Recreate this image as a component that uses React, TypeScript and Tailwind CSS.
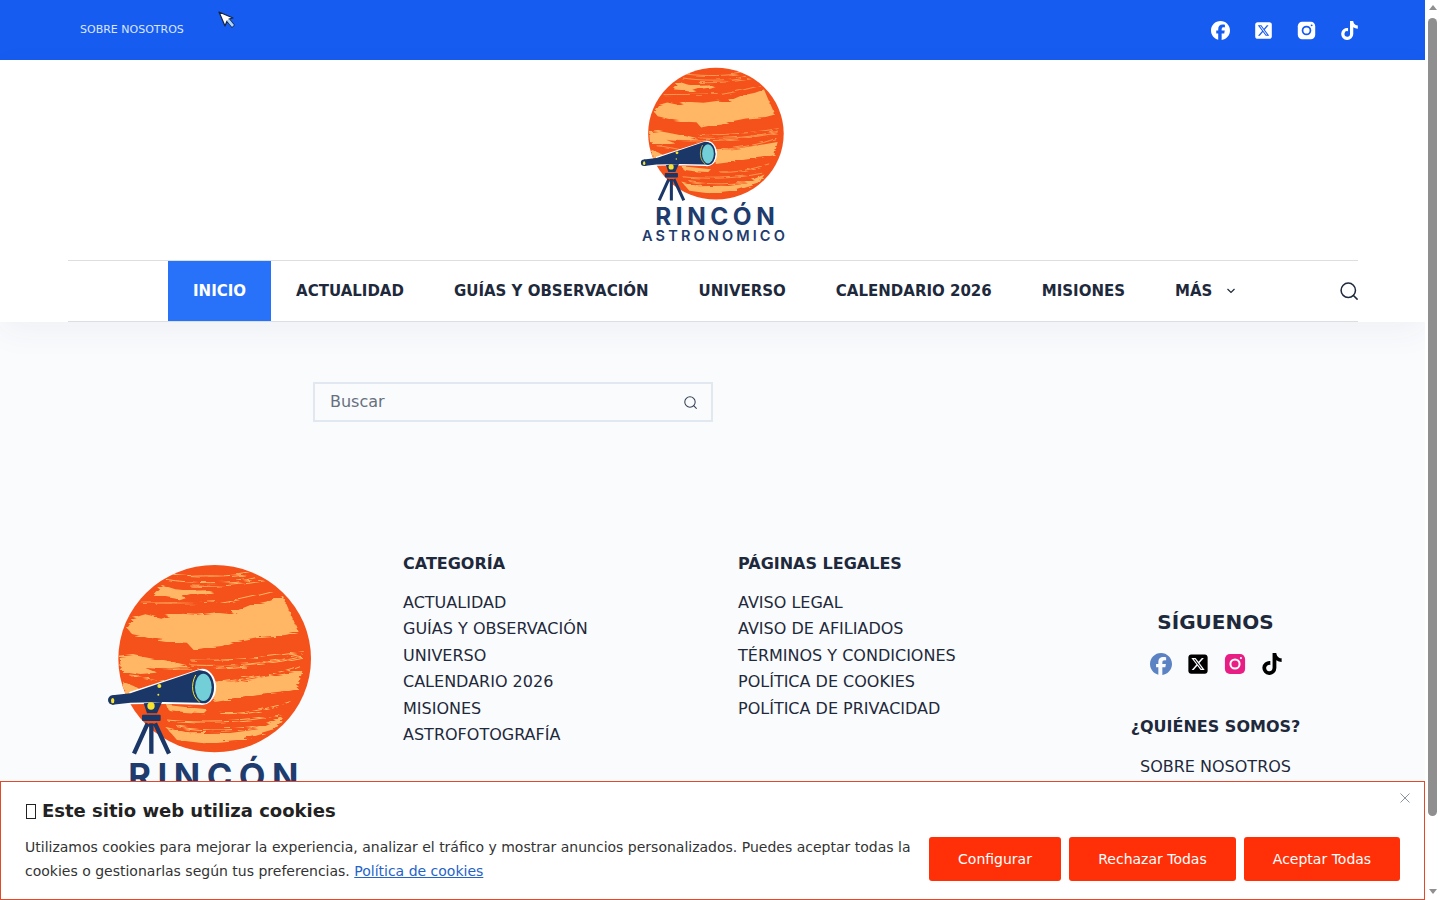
import { FaFacebook, FaSquareXTwitter, FaTiktok } from 'react-icons/fa6';

const FONT = "font-['DejaVu_Sans',sans-serif]";

const navItems = ['ACTUALIDAD', 'GUÍAS Y OBSERVACIÓN', 'UNIVERSO', 'CALENDARIO 2026', 'MISIONES'];
const categories = ['ACTUALIDAD', 'GUÍAS Y OBSERVACIÓN', 'UNIVERSO', 'CALENDARIO 2026', 'MISIONES', 'ASTROFOTOGRAFÍA'];
const legal = ['AVISO LEGAL', 'AVISO DE AFILIADOS', 'TÉRMINOS Y CONDICIONES', 'POLÍTICA DE COOKIES', 'POLÍTICA DE PRIVACIDAD'];

const stripes = [
  'M225 88 C300 100 420 105 500 82',
  'M240 72 C330 82 430 80 480 68',
  'M300 108 C400 112 480 100 525 92',
  'M150 160 C220 158 300 160 380 155',
  'M390 160 C450 150 510 135 560 122',
  'M300 330 C420 335 540 320 640 305',
  'M160 352 C300 365 480 355 635 322',
  'M300 345 C430 350 540 340 638 315',
  'M400 395 C470 385 560 375 632 345',
  'M390 490 C450 495 520 480 600 455',
  'M230 510 C330 520 450 520 570 495',
  'M240 545 C300 560 340 565 400 570',
  'M260 530 C340 545 450 545 560 520',
  'M120 378 C150 380 190 388 225 395',
];

// planet + telescope logo, drawn in one coordinate system and scaled by width
function Logo({ w, h }: { w: number; h: number }) {
  return (
    <svg width={w} height={h} viewBox="50 42 621 759" className="block shrink-0">
      <defs>
        <clipPath id="planet">
          <ellipse cx="373" cy="326" rx="289" ry="281" />
        </clipPath>
        <filter id="rough" x="-5%" y="-5%" width="110%" height="110%">
          <feTurbulence type="fractalNoise" baseFrequency="0.012 0.14" numOctaves="3" seed="4" />
          <feDisplacementMap in="SourceGraphic" scale="18" />
        </filter>
      </defs>
      <ellipse cx="373" cy="326" rx="289" ry="281" fill="#F4511B" />
      <g clipPath="url(#planet)">
        <g filter="url(#rough)" fill="#FFB766">
          <path d="M185 137 L215 105 L255 118 L300 122 L378 120 L345 130 L300 136 L265 148 L225 140Z" />
          <path d="M108 232 L125 205 L165 193 L210 203 L250 190 L320 194 L385 186 L420 190 L480 165 L540 152 L578 138 L598 185 L625 245 L585 255 L500 262 L430 275 L395 288 L345 293 L310 300 L290 278 L240 275 L190 268 L125 252Z" />
          <path d="M88 320 L130 315 L180 325 L250 338 L300 350 L240 358 L160 352 L200 368 L150 372 L92 362Z" />
          <path d="M98 395 L130 408 L150 420 L105 440Z" />
          <path d="M370 398 L450 392 L540 378 L636 362 L622 418 L570 428 L500 436 L430 448 L372 456Z" />
          <path d="M230 465 L290 472 L352 478 L340 490 L280 486 L235 480Z" />
          <path d="M225 530 L300 550 L400 548 L500 535 L580 500 L555 540 L460 568 L340 580 L260 570Z" />
        </g>
        <g stroke="#FFB766" strokeWidth="3" fill="none" filter="url(#rough)">
          {stripes.map((d) => (
            <path key={d} d={d} />
          ))}
        </g>
      </g>
      <path d="M120 428 L325 361 C355 352 378 385 374 420 C370 450 350 465 330 461 L215 458 L120 460 Z" fill="#fff" stroke="#fff" strokeWidth="6" />
      <path d="M66 436 L120 430 L325 361 C350 358 370 385 370 415 C368 445 350 462 330 458 L220 456 L120 458 L66 464Z" fill="#1B3768" />
      <circle cx="67" cy="450" r="14" fill="#1B3768" />
      <ellipse cx="67" cy="452" rx="5" ry="8" fill="#F7E32C" />
      <ellipse cx="340" cy="412" rx="31" ry="48" fill="#1B3768" />
      <ellipse cx="339" cy="412" rx="25" ry="41" fill="#72CFD8" />
      <path d="M316 375 C300 405 305 440 328 456" fill="none" stroke="#F7E32C" strokeWidth="3" />
      <circle cx="207" cy="408" r="6" fill="#F7E32C" />
      <circle cx="204" cy="434" r="3" fill="#F7E32C" />
      <path d="M160 460 L215 456 L200 490 L170 490Z" fill="#1B3768" />
      <circle cx="182" cy="468" r="11" fill="#F7E32C" />
      <rect x="155" y="494" width="56" height="19" rx="3" fill="#1B3768" />
      <path d="M172 520 L131 611 M183 520 L183 611 M194 520 L236 611" stroke="#1B3768" strokeWidth="13" fill="none" />
      <text x="114" y="714" textLength="510" lengthAdjust="spacing" fill="#1F3C6E" fontFamily="Inter, sans-serif" fontWeight="700" fontSize="104">RINCÓN</text>
      <text x="58" y="786" textLength="609" lengthAdjust="spacing" fill="#1F3C6E" fontFamily="Inter, sans-serif" fontWeight="600" fontSize="62">ASTRONOMICO</text>
    </svg>
  );
}

function InstaIcon({ bg, fg, size }: { bg: string; fg: string; size: number }) {
  return (
    <svg width={size} height={size} viewBox="0 0 24 24">
      <rect x="1" y="1" width="22" height="22" rx="5.5" fill={bg} />
      <circle cx="12" cy="12" r="5" fill="none" stroke={fg} strokeWidth="2.2" />
      <circle cx="18.5" cy="5.5" r="1.2" fill={fg} />
    </svg>
  );
}

function SearchIcon({ size, stroke }: { size: number; stroke: number }) {
  return (
    <svg width={size} height={size} viewBox="0 0 20 20" fill="none" stroke="currentColor" strokeWidth={stroke} strokeLinecap="round">
      <circle cx="9.2" cy="9.2" r="8" />
      <path d="M15.2 15.2 L19 19" />
    </svg>
  );
}

export default function App() {
  return (
    <div className={`flex h-screen w-full overflow-hidden bg-white ${FONT}`}>
      <div className="relative h-full w-[1425px] shrink-0 overflow-hidden bg-[#fafbfd]">
        {/* top bar */}
        <div className="flex h-[60px] items-center justify-between bg-[#175cf0] pl-[80px] pr-[66px] text-white">
          <a className="text-[11px] text-[#dbe6fd]">SOBRE NOSOTROS</a>
          <div className="flex items-center gap-[24px]">
            <FaFacebook size={19} />
            <FaSquareXTwitter size={19} />
            <InstaIcon bg="#ffffff" fg="#175cf0" size={19} />
            <FaTiktok size={19} />
          </div>
        </div>

        {/* mouse pointer caught in the shot */}
        <svg className="absolute left-[217px] top-[11px]" width="19" height="18" viewBox="0 0 19 18">
          <path d="M2 1 L8 15 L10 10 L15 16 L17 14 L12 8 L16 7Z" fill="#ffffff" stroke="#14233f" strokeWidth="1.2" strokeLinejoin="round" />
          <path d="M10 10 L15 16 L17 14 L12 8Z" fill="#a9d4fb" />
        </svg>

        {/* header */}
        <header className="relative bg-white shadow-[0_10px_30px_rgba(40,60,90,0.05)]">
          <div className="flex h-[200px] justify-center pt-[7px]">
            <Logo w={146} h={178} />
          </div>
          <div className="ml-[68px] mr-[67px] flex h-[62px] items-stretch border-y border-[#dcdfe2] pl-[100px] text-[#1e293b]">
            <a className="flex items-center bg-[#2872fa] px-[25px] text-[15px] font-bold text-white">INICIO</a>
            {navItems.map((item) => (
              <a key={item} className="flex items-center px-[25px] text-[15px] font-bold">
                {item}
              </a>
            ))}
            <a className="flex items-center gap-[15px] px-[25px] text-[15px] font-bold">
              MÁS
              <svg width="8" height="6" viewBox="0 0 8 6" fill="none" stroke="currentColor" strokeWidth="1.2">
                <path d="M0.5 1 L4 4.5 L7.5 1" />
              </svg>
            </a>
            <div className="ml-auto flex items-center text-[#1e293b]">
              <SearchIcon size={18} stroke={1.7} />
            </div>
          </div>
        </header>

        {/* search */}
        <main className="pl-[313px] pt-[60px]">
          <div className="flex h-[40px] w-[400px] items-center justify-between border-2 border-[#e1e8ef] pl-[15px] pr-[14px] text-[#334155]">
            <span className="text-[16px] text-[#66707f]">Buscar</span>
            <SearchIcon size={13} stroke={1.6} />
          </div>
        </main>

        {/* footer */}
        <footer className="ml-[68px] mr-[67px] mt-[133px] grid grid-cols-4 gap-[50px] text-[#1e293b]">
          <div className="flex justify-center pt-[9px]">
            <Logo w={207} h={253} />
          </div>
          <div>
            <h3 className="text-[16px] font-bold leading-[18px]">CATEGORÍA</h3>
            <ul className="mt-[17px] text-[16px] leading-[26.4px]">
              {categories.map((item) => (
                <li key={item}>{item}</li>
              ))}
            </ul>
          </div>
          <div>
            <h3 className="text-[16px] font-bold leading-[18px]">PÁGINAS LEGALES</h3>
            <ul className="mt-[17px] text-[16px] leading-[26.4px]">
              {legal.map((item) => (
                <li key={item}>{item}</li>
              ))}
            </ul>
          </div>
          <div className="flex flex-col items-center pt-[55px]">
            <h3 className="text-[20px] font-bold leading-[24px]">SÍGUENOS</h3>
            <div className="mt-[19px] flex items-center gap-[15px] pl-[1px]">
              <FaFacebook size={22} className="text-[#5b82c2]" />
              <FaSquareXTwitter size={22} className="text-black" />
              <InstaIcon bg="#E91E85" fg="#ffffff" size={22} />
              <FaTiktok size={22} className="text-black" />
            </div>
            <h3 className="mt-[42px] text-[16px] font-bold leading-[20px]">¿QUIÉNES SOMOS?</h3>
            <p className="mt-[20px] text-[16px] leading-[20px]">SOBRE NOSOTROS</p>
          </div>
        </footer>

        {/* cookie banner */}
        <div className="absolute inset-x-0 bottom-0 flex h-[119px] border border-[#e4472a] bg-white pl-[24px]">
          <div className="w-[890px] shrink-0 pt-[17px]">
            <h2 className="flex items-center text-[18px] font-bold leading-[24px] text-[#222222]">
              <span className="ml-[1px] mr-[6px] inline-block h-[15px] w-[10px] border border-[#222222]" />
              Este sitio web utiliza cookies
            </h2>
            <p className="mt-[12px] text-[14px] leading-[24px] text-[#333333]">
              Utilizamos cookies para mejorar la experiencia, analizar el tráfico y mostrar anuncios personalizados. Puedes aceptar todas la cookies o gestionarlas según tus preferencias.{' '}
              <a className="text-[#2563c9] underline">Política de cookies</a>
            </p>
          </div>
          <div className="ml-[14px] mt-[55px] flex h-[44px] gap-[8px] text-[14px] text-white">
            <button className="w-[132px] rounded-[3px] bg-[#ff3008]">Configurar</button>
            <button className="w-[167px] rounded-[3px] bg-[#ff3008]">Rechazar Todas</button>
            <button className="w-[156px] rounded-[3px] bg-[#ff3008]">Aceptar Todas</button>
          </div>
          <svg className="absolute right-[14px] top-[11px] text-[#8a94a3]" width="10" height="10" viewBox="0 0 10 10" fill="none" stroke="currentColor" strokeWidth="1">
            <path d="M0.5 0.5 L9.5 9.5 M9.5 0.5 L0.5 9.5" />
          </svg>
        </div>
      </div>

      {/* scrollbar */}
      <div className="flex h-full w-[15px] shrink-0 flex-col items-center bg-white">
        <div className="mt-[5px] h-0 w-0 border-x-[4px] border-b-[5px] border-x-transparent border-b-[#8f8f8f]" />
        <div className="mt-[8px] h-[798px] w-[9px] rounded-full bg-[#8f8f8f]" />
        <div className="mt-auto mb-[6px] h-0 w-0 border-x-[4px] border-t-[5px] border-x-transparent border-t-[#8f8f8f]" />
      </div>
    </div>
  );
}
